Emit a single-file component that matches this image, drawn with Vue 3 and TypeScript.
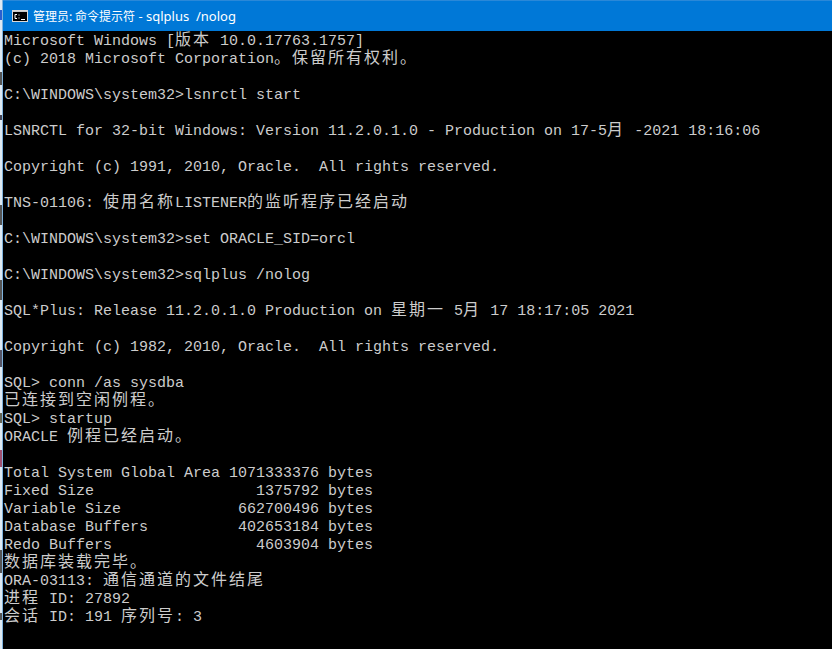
<script setup lang="ts">
const titleWide = '管理员: 命令提示符'
const titleLatin = ' - sqlplus  /nolog'

const text: string[] = [
  'Microsoft Windows [版本 10.0.17763.1757]',
  '(c) 2018 Microsoft Corporation。保留所有权利。',
  '',
  'C:\\WINDOWS\\system32>lsnrctl start',
  '',
  'LSNRCTL for 32-bit Windows: Version 11.2.0.1.0 - Production on 17-5月 -2021 18:16:06',
  '',
  'Copyright (c) 1991, 2010, Oracle.  All rights reserved.',
  '',
  'TNS-01106: 使用名称LISTENER的监听程序已经启动',
  '',
  'C:\\WINDOWS\\system32>set ORACLE_SID=orcl',
  '',
  'C:\\WINDOWS\\system32>sqlplus /nolog',
  '',
  'SQL*Plus: Release 11.2.0.1.0 Production on 星期一 5月 17 18:17:05 2021',
  '',
  'Copyright (c) 1982, 2010, Oracle.  All rights reserved.',
  '',
  'SQL> conn /as sysdba',
  '已连接到空闲例程。',
  'SQL> startup',
  'ORACLE 例程已经启动。',
  '',
  'Total System Global Area 1071333376 bytes',
  'Fixed Size                  1375792 bytes',
  'Variable Size             662700496 bytes',
  'Database Buffers          402653184 bytes',
  'Redo Buffers                4603904 bytes',
  '数据库装载完毕。',
  'ORA-03113: 通信通道的文件结尾',
  '进程 ID: 27892',
  '会话 ID: 191 序列号: 3',
]

interface Seg { t: string; wide: boolean }

function segments(line: string): Seg[] {
  const parts = line.match(/[\u3000-\u9fff]+|[^\u3000-\u9fff]+/g) ?? []
  return parts.map((t) => ({ t, wide: /[\u3000-\u9fff]/.test(t) }))
}

const lines = text.map(segments)
</script>

<template>
  <div class="screen">
    <div class="desktop-edge"></div>
    <div class="window">
      <header class="titlebar">
        <svg class="icon" width="16" height="12" viewBox="0 0 16 12">
          <rect x="0.5" y="0.5" width="15" height="11" fill="#000" stroke="#d8d8d8" />
          <rect x="1" y="1" width="14" height="1" fill="#c8c8c8" />
          <path d="M3 4.5H5M3 4.5V8.5H5M7 4.5V5.5M7 7.5V8.5M9 9.5H13" stroke="#fff" fill="none" />
        </svg>
        <span class="title"><span class="title-wide">{{ titleWide }}</span>{{ titleLatin }}</span>
      </header>
      <main class="console">
        <div v-for="(segs, i) in lines" :key="i" class="line">
          <span v-for="(s, j) in segs" :key="j" :class="{ wide: s.wide }">{{ s.t }}</span>
        </div>
      </main>
    </div>
  </div>
</template>

<style>
html, body { margin: 0; background: #000; }
</style>

<style scoped>
.screen {
  width: 832px;
  height: 649px;
  display: flex;
  overflow: hidden;
}
.desktop-edge {
  flex: none;
  width: 2px;
  border-right: 1px solid #7fb2dc;
  background: linear-gradient(
    to bottom,
    #dfeaf3 0 10px, #2a5fd0 10px 20px, #dfeaf3 20px 72px,
    #555 72px 85px, #dfeaf3 85px 115px, #445 115px 120px,
    #dfeaf3 120px 205px, #555 205px 225px, #dfeaf3 225px 280px,
    #555 280px 300px, #dfeaf3 300px 350px, #556 350px 367px,
    #dfeaf3 367px 413px, #665 413px 423px, #dfeaf3 423px 450px,
    #a05070 450px 467px, #dfeaf3 467px 550px, #555 550px 573px,
    #dfeaf3 573px 613px, #555 613px 620px, #dfeaf3 620px
  );
}
.window {
  flex: 1;
  min-width: 0;
  display: flex;
  flex-direction: column;
  background: #000;
}
.titlebar {
  height: 31px;
  flex: none;
  display: flex;
  align-items: center;
  gap: 5px;
  padding-left: 9px;
  box-sizing: border-box;
  background: #0078d7;
  border-top: 1px solid #2a88d8;
}
.icon { flex: none; }
.title {
  font: 13px "Noto Sans", sans-serif;
  color: #fff;
  white-space: pre;
}
.title-wide {
  font: 12px "Noto Sans CJK SC", sans-serif;
}
.console {
  flex: 1;
  padding: 2px 0 0 1px;
  font: 15px/18px "Liberation Mono", monospace;
  color: #cccccc;
}
.line {
  height: 18px;
  white-space: pre;
}
.wide {
  font-family: "Noto Sans CJK SC", sans-serif;
  font-size: 16px;
  letter-spacing: 2px;
  line-height: 0;
}
</style>
